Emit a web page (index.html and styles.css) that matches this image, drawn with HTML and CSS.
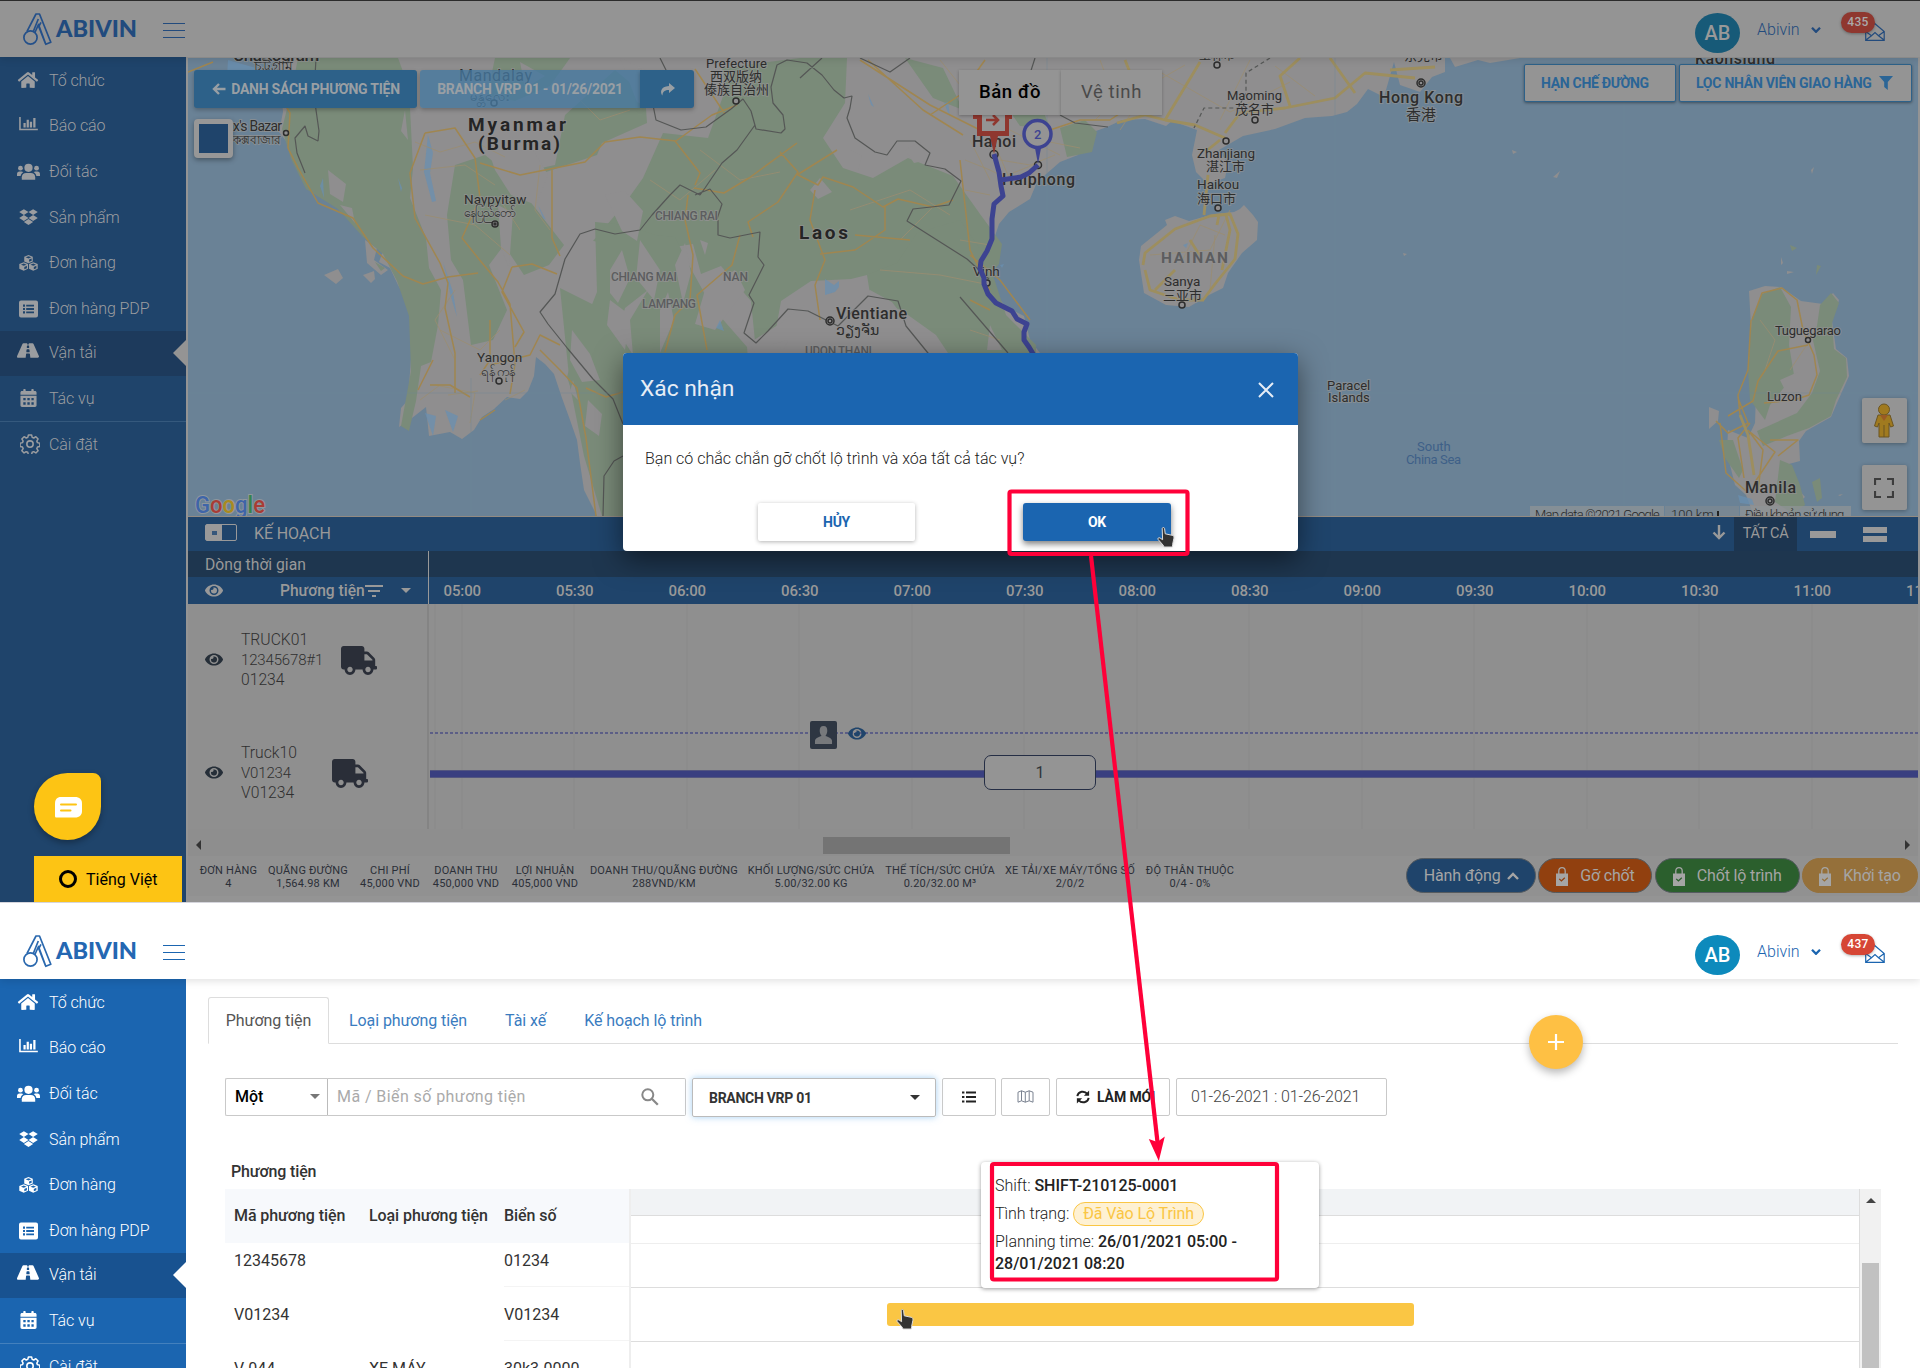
FILE: index.html
```html
<!DOCTYPE html>
<html lang="vi">
<head>
<meta charset="utf-8">
<title>Abivin vRoute</title>
<link rel="stylesheet" href="styles.css">
</head>
<body>
<svg class="sprite" aria-hidden="true">
  <symbol id="home" viewBox="0 0 576 512"><path d="M280.37 148.26L96 300.11V464a16 16 0 0 0 16 16l112.06-.29a16 16 0 0 0 15.92-16V368a16 16 0 0 1 16-16h64a16 16 0 0 1 16 16v95.64a16 16 0 0 0 16 16.05L464 480a16 16 0 0 0 16-16V300L295.67 148.26a12.19 12.19 0 0 0-15.3 0zM571.6 251.47L488 182.56V44.05a12 12 0 0 0-12-12h-56a12 12 0 0 0-12 12v72.61L318.47 43a48 48 0 0 0-61 0L4.34 251.47a12 12 0 0 0-1.6 16.9l25.5 31A12 12 0 0 0 45.15 301l235.22-193.74a12.19 12.19 0 0 1 15.3 0L530.9 301a12 12 0 0 0 16.9-1.6l25.5-31a12 12 0 0 0-1.7-16.93z"/></symbol>
  <symbol id="chart" viewBox="0 0 20 15"><path d="M0 0h1.700v12.600H20v1.700H0zM4.600 6.500H7v4.700H4.600zM8 3h2.400v8.200H8zM11.400 5h2.400v6.200h-2.400zM15.100 1h2.400v10.200h-2.400z"/></symbol>
  <symbol id="users" viewBox="0 0 24 18"><circle cx="12" cy="4.600" r="4.300"/><path d="M5 17v-2.500c0-3 2-4.500 4.500-4.500h5c2.500 0 4.500 1.500 4.500 4.500V17z"/><circle cx="3.600" cy="5" r="2.500"/><circle cx="20.400" cy="5" r="2.500"/><path d="M0 13v-1.500C0 9.500 1 8.500 2.500 8.500h2.300c.8 0 1.300.3 1.700.8C4.700 10.300 4 11.500 3.800 13.300H0zM24 13v-1.500c0-2-1-3-2.500-3h-2.300c-.8 0-1.300.3-1.700.8 1.800 1 2.500 2.200 2.700 4H24z"/></symbol>
  <symbol id="box" viewBox="0 0 528 512"><path d="M264.400 116.300l-132 84.300 132 84.300-132 84.300L0 284.100l132.300-84.300L0 116.300 132.300 32l132.100 84.300zM131.600 395.700l132-84.300 132 84.300-132 84.300-132-84.300zm132.800-111.600l132-84.300-132-83.600L395.700 32 528 116.300l-132.300 84.300L528 284.800l-132.300 84.300-131.300-85z"/></symbol>
  <symbol id="cubes" viewBox="0 0 20 17"><path fill-rule="evenodd" d="M10 0l4.500 1.800v5L10 8.800 5.500 6.800v-5zM10 1.300L7 2.500l3 1.200 3-1.200zM10.600 4.800v2.500l2.700-1.200V3.700zM5 7.700l4.500 1.900v5L5 16.600.3 14.600v-5zM5 9.100L2.100 10.300 5 11.500l2.900-1.200zM5.600 12.600V15l2.700-1.100v-2.400zM15 7.700l4.700 1.900v5L15 16.600l-4.500-2v-5zM15 9.100l-2.900 1.200L15 11.500l2.900-1.200zM15.600 12.600V15l2.700-1.100v-2.400z"/></symbol>
  <symbol id="listalt" viewBox="0 0 19 17"><path fill-rule="evenodd" d="M2 0h15a2 2 0 0 1 2 2v13a2 2 0 0 1-2 2H2a2 2 0 0 1-2-2V2a2 2 0 0 1 2-2zM4 4v2.200h2V4zM7.200 4.200V6H15V4.200zM4 7.500v2h2v-2zM7.200 7.600v1.800H15V7.600zM4 10.800V13h2v-2.200zM7.200 11v1.800H15V11z"/></symbol>
  <symbol id="road" viewBox="0 64 576 384"><path d="M573.19 402.67l-139.79-320C428.43 71.29 417.6 64 405.68 64h-97.59l2.45 23.16c.5 4.72-3.21 8.84-7.96 8.84h-29.16c-4.75 0-8.46-4.12-7.96-8.84L267.91 64h-97.59c-11.93 0-22.75 7.29-27.73 18.67L2.8 402.67C-6.45 423.86 8.31 448 30.54 448h196.84l10.31-97.68c.86-8.14 7.72-14.32 15.91-14.32h68.8c8.19 0 15.05 6.18 15.91 14.32L348.62 448h196.84c22.23 0 36.99-24.14 27.73-45.33zM260.4 135.16a8 8 0 0 1 7.96-7.16h39.29c4.09 0 7.53 3.09 7.96 7.16l4.6 43.58c.75 7.09-4.81 13.26-11.93 13.26h-40.54c-7.13 0-12.68-6.17-11.93-13.26l4.59-43.58zM315.64 304h-55.29c-9.5 0-16.91-8.23-15.91-17.68l5.07-48c.86-8.14 7.72-14.32 15.91-14.32h45.15c8.19 0 15.05 6.18 15.91 14.32l5.07 48c1 9.45-6.41 17.68-15.91 17.68z"/></symbol>
  <symbol id="calendar" viewBox="0 0 17 19"><path fill-rule="evenodd" d="M3 2V.8C3 .3 3.300 0 3.800 0h.9c.5 0 .8.3.8.8V2h6V.8c0-.5.3-.8.8-.8h.9c.5 0 .8.3.8.8V2h1.300C16.300 2 17 2.700 17 3.700V6H0V3.700C0 2.700.7 2 1.700 2zM0 7.200h17v10c0 1-.7 1.700-1.700 1.700H1.700C.7 18.900 0 18.200 0 17.200zM3 9.500V12h2.500V9.500zm4.300 0V12h2.500V9.500zm4.300 0V12H14V9.500zM3 14v2.500h2.500V14zm4.300 0v2.500h2.500V14zm4.300 0v2.500H14V14z"/></symbol>
  <symbol id="cog" viewBox="0 0 24 24"><g fill="none" stroke="currentColor" stroke-width="1.900" stroke-linejoin="round"><circle cx="12" cy="12" r="3.800"/><path d="M10 1.500h4l.7 3 2 .8 2.600-1.600 2.800 2.800-1.600 2.700.8 1.900 3 .8v4l-3 .7-.8 2 1.600 2.600-2.800 2.800-2.700-1.600-1.900.8-.8 3h-4l-.7-3-2-.8-2.600 1.600-2.800-2.800 1.600-2.700-.8-1.900-3-.8v-4l3-.7.8-2-1.600-2.600 2.800-2.800 2.700 1.600 1.900-.8z" transform="translate(.5 -.3) scale(.96)"/></g></symbol>
  <symbol id="eye" viewBox="0 60 576 392"><path d="M572.52 241.4C518.29 135.59 410.93 64 288 64S57.68 135.64 3.48 241.41a32.35 32.35 0 0 0 0 29.19C57.71 376.41 165.07 448 288 448s230.32-71.64 284.52-177.41a32.35 32.35 0 0 0 0-29.19zM288 400a144 144 0 1 1 144-144 143.93 143.93 0 0 1-144 144zm0-240a95.31 95.31 0 0 0-25.31 3.79 47.85 47.85 0 0 1-66.9 66.9A95.78 95.78 0 1 0 288 160z"/></symbol>
  <symbol id="truck" viewBox="0 0 640 512"><path d="M624 352h-16V243.900c0-12.700-5.100-24.900-14.100-33.900L494 110.100c-9-9-21.200-14.100-33.900-14.100H416V48c0-26.500-21.500-48-48-48H48C21.500 0 0 21.500 0 48v320c0 26.500 21.500 48 48 48h16c0 53 43 96 96 96s96-43 96-96h128c0 53 43 96 96 96s96-43 96-96h48c8.800 0 16-7.200 16-16v-32c0-8.800-7.200-16-16-16zM160 464c-26.500 0-48-21.500-48-48s21.500-48 48-48 48 21.500 48 48-21.500 48-48 48zm320 0c-26.500 0-48-21.500-48-48s21.500-48 48-48 48 21.500 48 48-21.500 48-48 48zm80-208H416V144h44.100l99.900 99.900V256z"/></symbol>
  <symbol id="lock" viewBox="0 0 12 19"><path fill="none" stroke="currentColor" stroke-width="1.300" d="M2.800 7V4C2.800 1.800 4 .7 6 .7S9.200 1.800 9.200 4v3"/><path fill-rule="evenodd" d="M0 6.500h12V19H0zM3.600 11.400l-.8.900 2.600 2.500 3.800-3.600-.8-.9-3 2.800z"/></symbol>
  <symbol id="hand" viewBox="0 0 18 21"><path stroke="#ddd" stroke-width="1" fill="#333" d="M5.200 1.600c0-1.400 2.300-1.400 2.400 0l.6 5.200 7 1.500c1.600.5 1.900 1.300 1.700 3l-1.300 6.200-.2 2.500H7L6 18 1.200 12.600c-.8-1.400.5-2.400 1.900-1.600l2.500 1.700z"/></symbol>
  <symbol id="logo" viewBox="23 12 30 33"><g fill="none" stroke="currentColor" stroke-width="1.700" stroke-linejoin="round"><circle cx="30.500" cy="36.500" r="6.600"/><path d="M27 30.300L36 13h3.500l11.300 28.300-5 2-7.300-19.800-3.800 8.500M33.300 30.500l5-12.500M41 21.300l-2.300 4.200 6.800 17.200"/></g></symbol>
  <symbol id="mail" viewBox="0 0 20 18"><path fill="none" stroke="currentColor" stroke-width="1.200" d="M.7 8.500L6 2.500 10 .8l9.200 7.700v8.800H.7zM.7 8.500l5.800 4.300L10 9.500l3.500 3.300 5.700-4.300M6.500 12.800L.9 17.100M13.500 12.800l5.600 4.300"/></symbol>
</svg>

<div class="page">
<!-- ============ Route planning screen with confirm dialog ============ -->
<section class="screen screen-plan">
  <header class="topbar">
    <svg class="logo-mark"><use href="#logo"/></svg>
    <svg class="logo-name" viewBox="0 0 80 22"><text x="0" y="18.500" textLength="81" lengthAdjust="spacingAndGlyphs">ABIVIN</text></svg>
    <div class="burger"><i></i><i></i><i></i></div>
    <div class="account">
      <span class="avatar">AB</span><span class="user">Abivin</span>
      <svg class="chev" viewBox="0 0 10 6"><path d="M1 .8l4 4 4-4" fill="none" stroke="currentColor" stroke-width="2.300"/></svg>
      <span class="inbox"><svg><use href="#mail"/></svg><b>435</b></span>
    </div>
  </header>
  <div class="columns">
    <nav class="side">
      <a><svg class="w21"><use href="#home"/></svg>Tổ chức</a>
      <a><svg class="w20 up"><use href="#chart"/></svg>Báo cáo</a>
      <a><svg class="w23"><use href="#users"/></svg>Đối tác</a>
      <a><svg class="w20"><use href="#box"/></svg>Sản phẩm</a>
      <a><svg class="w20"><use href="#cubes"/></svg>Đơn hàng</a>
      <a><svg class="w20"><use href="#listalt"/></svg>Đơn hàng PDP</a>
      <a class="on"><svg class="w21 road"><use href="#road"/></svg>Vận tải</a>
      <a class="low"><svg class="w20 cal"><use href="#calendar"/></svg>Tác vụ</a>
      <a class="sep"><svg class="w20 cog"><use href="#cog"/></svg>Cài đặt</a>
      <div class="chat"><svg viewBox="0 0 27 21"><path fill="#fff" d="M6 0h14c4.500 0 7 2.500 7 6.500v7.500c0 4-2.500 6.500-7 6.500H1.500C.5 20.500 0 20 0 19V6.500C0 2.500 2 0 6 0z"/><path stroke="#fdc414" stroke-width="2" stroke-linecap="round" d="M6 7.500h15M6 13.500h9.500"/></svg></div>
      <div class="lang"><i></i>Tiếng Việt</div>
    </nav>
    <main class="work">
      <div class="map">
        <svg class="mapart" viewBox="188 58 1730 458">
          <g class="land">
            <path d="M188 58H278L283 112 279 132 290 146 305 170 325 195 329 180 334 200 341 209 348 192 358 207 366 212 380 218 369 225 372 238 384 248 379 262 390 268 398 285 408 303 413 318 412 345 408 400 401 408 399 427 412 418 426 407 429 436 450 432 462 439 474 430 482 417 494 409 507 397 520 399 528 391 534 376 536 357 545 364 554 374 562 398 570 420 577 440 580 463 584 490 597 516H1040V353L1030 340 1024 316 1006 307 992 290 988 268 992 245 999 224 1009 212 1030 199 1037 182 1060 162 1078 155 1085 135 1107 127 1122 120 1145 119 1166 126 1172 121 1197 130 1192 155 1196 172 1208 184 1225 178 1228 164 1219 150 1243 136 1275 129 1305 118 1332 116 1347 112 1357 104 1368 89 1384 97 1394 62 1400 85 1420 92 1432 77 1445 72V58z"/>
            <path d="M1139 260l2-14 26-21 -2-5 10-4 14 5 25-7 20-2 6-3 4-4 9 10 5 7-1 18-15 13-14 20-5 15-14 7-20 12-23-2-22-12z"/>
            <path d="M1749 291l16-5 16 1 20 14 22 3 10-11 6 7-7 21 4 28 11 9 2 18-12 27-6 14-25 14-7 10 1 20-15 4 10 20 10 12-10 9h-7v10h-34l-8-21-11-10-8-32 1-23 20 8 7-15 1-30-4-48z"/>
            <path d="M1709 407l10 4-1 10-9 8zM1450 58h70l-30 5-12-3-23 7zM324 275l14-6 5 9-7 6zM365 240l12 8-3 12 14 10-7 5-14-12zM363 275l11-4 1 8-4 4z"/>
            <path d="M1512 150l5 2-4 2zM1560 171l-3 7-4-1zM1811 170l3-3-2 7zM1781 257l2 6-2 2zM1787 271l7 1-7 2zM1403 253l4 1-3 2zM1334 425l7-2-7 2zM1838 495l5-1-3 2z"/>
          </g>
          <g class="wood">
            <path d="M298 58h100l11 30 4 80-3 30 16 40 3 30 12 22-3 35-7 37-10 4-5 35-7 30-8-5 10-55-2-55-12-35-14-27-20-17-25-28-32-20-15-30-9-30 10-40z"/>
            <path d="M495 58h75l-20 28-35 15-28-5zM615 70l30 25 2 28-45 20-5 12-60 20-8 25 35 45-15 20-25 10-20-30-15 20 18 45-14 30-22 5-8-65-12-20-4-45 8-50 30-10 25 20 45-10 10-50z"/>
            <path d="M800 58h47l-2 45-22 35 20 30 30 10 35-20 45 18 27 38 22 30-3 20-20 25-28-10-30-15-30 5-40 10-40 2-30 20-8 45-18-5-4-40-30-35-20 8-8-30-30 5-30-20-15 15-25-3 30-35 20-28 20-45 45 5 18-50-4-20z"/>
            <path d="M595 222l30 3 30 10 20 2 15 30 22 40 35 40 4 52-12 40-5 22-50 4-40 40-22-30-35-38-20-60 12-40 18-45z"/>
            <path d="M560 288l40 20 24 45v163h-22l-18-60-14-70z"/>
            <path d="M960 220l28 40 18 55 30 30v35h-70l-30-45-35-25-30-10-4-25 30-12 20-30zM995 90l20-15 25 28 10 25-30-2zM1060 128l25-8 12 12-5 20-25 5zM905 58l28 40 30 12-20-42z"/>
            <path d="M1752 318l10-24 18-7 11 20-2 38 5 30-24 30-5 15-15-20-2-30zM1820 305l11-12 8 10-7 20 2 26 12 9 1 19-11 23-5 16-22 12-22 8-24 10-6-15 40-18 15-20 8-22-8-35 5-10z"/>
            <path d="M1719 440l14 0 10 30-4 8-14-20zM1780 460l12 5 8 20 5 20-12 9-18-12zM1812 482l8-4 2 20-5 4zM1790 245l7 3-5 3zM1817 265l4 1-5 9zM375 262l10 6-4 3z"/>
          </g>
          <g class="gap">
            <path d="M328 170l18 14-3 18-13-8zM340 205l12 3 3 15zM480 125l50 20 18 30-12 30-25-10-16-25zM498 205l15 8-4 55-8-20zM605 195l20-4 18 20-6 30-15-10zM610 270l12-20 8 28-12 25-8-10zM640 240l20 30-6 30-18-22zM675 265l10-22 6 30-8 30zM648 290l-18 30 3 35-14-22 6-25zM610 300l20 15-5 35-18-25zM705 290l30-20 10 20-30 40-20-6zM660 310l8-18 6 28-14 33zM805 305l40 0 25-15 22 12 30 40v11H755l-6-10 32-20zM810 190l10-12 12 14-14 7zM990 325l12 25h-15zM905 150l15-8 8 18-14 3zM1780 380l18-8 12 8-5 14h-18z"/>
            <path d="M572 330l18 24 10 26-18 2-12-22zM588 400l14 14-3 22-14-10zM573 380l-3 12 8 8zM405 110l3 30-7-9zM620 58l30 14 20 20-8 20-25-10zM520 62l25 14-20 12zM850 150l12 6-4 16-8-8zM700 240l8 3-3 12zM770 345l18-5-4 9z"/>
          </g>
          <g class="water">
            <path d="M825 279l9 6 5-4v6l-4 5-10 3zM720 320l4 11-8-3zM538 205l8 15-3-2zM868 94l6 13-3-2zM944 103l4-1 2 15zM398 178l4 10-1 4zM428 135l5 18-3 20 6 28-4 1-8-30zM443 262l10 30 4 25-6-20zM323 178l1 20-4-12zM1000 265l4-1-2 4zM1183 245l5-2-2 5zM228 60l35 10-22 16-14-10z"/>
            <path d="M425 413l8 23 3-20zM445 410l8 22 5-16zM1738 495l14 4 2 6-14-2z"/>
          </g>
          <g class="roads thin">
            <path d="M415 142l25 10 35-10 30 15M420 170l45-5 30 20M425 215l50 10 35 30M540 165l-5 45 15 20M455 290l-20 30 20 40M440 330l40 20 20-20M500 200l20 30M570 90l30 30 30-10M650 180l30 20 35-30M700 150l40 30 40-8M880 270l60 5 50 10M850 210l60-20 40 25M900 240l35-35M940 60l40 50 30 70M1120 130l30-45 35-20M1160 72l70 40 60-30M1100 60l15 40-20 20M1250 60l-30 60M1275 66l40 30M1180 265l20-40 25 10M1150 255l60-5 20-40M1210 290l5-55M1760 320l15 20-10 30M1810 340l-20 30M435 385l40 8-5 30M448 395l30-4M420 400l20-15"/>
            <path d="M965 160l25 10 30 15M970 140l20 40M1000 160l30 5 25-10M1008 175l30-12M1040 140l40 8M1010 130l50 25M960 240l30 5M985 95l20 20M965 190l25 5M970 330l30 10M505 400l20-10"/>
          </g>
          <g class="roads">
            <path d="M281 98l9 15-2 35 10 20 20 35 35 15 20 30 30 28 20 8 25-7 30-4M188 72l25-10M425 133l-15 40 5 45 25 45 8 20-3 25 10 45 0 40M425 133l30-5 20 30 5 40-18 40 16 20 20 24 12 22 5 60-5 30M480 163l40 12 65-13 20-20 35-5 36 4 36-26 25-10M695 69l20 30 10 15M675 141l25 32-5 12M552 168v70l8 18M512 267l20-3 25 10M512 267l-10 25 22 40-9 15M540 350l20 20 17 18 9 50 10 78M586 388l20 9 17-5M694 188l30 5 25-15 48-35M797 175l40-25M780 152l18 20-20 30-30 20 5 15M798 175l20 10 5-8 30 10 30 20 15-8 35 8 20-7M885 205v25l-30 20-35 4M855 235l55 5M815 190l-5 30 15 40-10 25 5 35M688 195l-3 25 8 35-3 45-15 15-10 37M740 235l-8 30-35 30 10 55"/>
            <path d="M860 60l70 45 50 25M868 60l55 50 40 25M985 60l-25 35-30 20M960 160l10 90 20 40M970 255l30 25 30 40M1050 130l30-10 30 0 30-20M970 300l20 10M433 360l-15 30M430 385l20 0 20 12M490 365l40-10 10-20 20 10M480 420l15-10M480 375l10-15 0-40M1752 320l10-27 20-5 15 12 6 30 11 25 3 20-8 20-15 5-30 3M1751 320l-3 50-10 25 2 20M1808 345l-30 6-20 30-5 20-25 15M1738 398l10 25-20 10-12-12M1720 423l6 50 20 18M1750 423l-12 15 6 40M1748 430l15 20-5 40M1750 432l25 20-20 30M1770 440l28 0-20 16"/>
          </g>
          <g class="roads main">
            <path d="M1165 120l-20-5-28 8M1165 120l35-58M1165 120l30 5 30 13M1220 140l-15 12M1208 175l-4 40M1225 133l15-20 45-5 50-10 30-25 50 5M1300 58l-20 18 10 30M1330 58l25 35M1125 60l20 50M1390 70l45-3M1143 265l2-12 30-24 35-13 20-2 8 20-3 25-20 25-12 16M1145 270l5 20 30 10 24 0M1155 290l20-20M1226 215l4 15-8 40M1219 215l-2 10M1190 240l10 16M1740 415l8 20 6 40"/>
          </g>
          <g class="border">
            <path d="M316 58l-2 38 5 35-1 10-10-5-3-10-10 12 2 15 8 20M660 58l6 12-14 30 4 20 25 10 25-3 25-18 12-10 8 12 5 18 25 4 4-4 -2-14-10-12-2-16 6-22 10-5 20 3 15 12 12 15 10 8 8-2-2 12-3 10 8 20 20 14 12 3 10-14 18 0 15 12-5 12 20 4 16 12-12 24-36 4-6 12 60 38 22 20M800 78l22-20M755 125l-18 25-15 13-17 25-5 7-20-10-10 10-18 20-12 15-25 4-20-5-15 5-15 25-10 35-15 18 8 12 20 25 25 30 20 20 10 25M695 195l15-6 12 15-5 15M718 220v15l12 3 30-6-2 25 6 8-15 30 5 8-10 30 12 10 12-12 20-22 20 2 30 15 20-20 10-10 30 5 8 25 26 32M960 297l48 56M603 516l1-40 10-15 9-5M1035 58l-8 25M1060 115l15 8 33 4M860 58l30 14 20-14"/>
            <path stroke-dasharray="4 3" d="M1270 58l-24 15v20l-8 15-34 0-10 20"/>
          </g>
          <path class="grid" d="M471 378v138M1047 58v295M1335 58v458M1624 102v414M1911 58v458M188 393H1918"/>
          <g class="lbl">
            <text x="233" y="61" font-size="17" font-weight="500" letter-spacing="-.4">Chattogram</text><text x="254" y="71" font-size="14">চট্টগ্রাম</text>
            <text x="233" y="131" font-size="14" textLength="49">x's Bazar</text><text x="233" y="144" font-size="12">কক্সবাজার</text><circle cx="286" cy="133" r="2.500"/>
            <text x="459" y="81" font-size="16" textLength="73">Mandalay</text><text x="470" y="101" font-size="13">မန္တလေး</text><circle cx="494" cy="103" r="3"/>
            <text class="big" x="468" y="131" textLength="98">Myanmar</text><text class="big" x="478" y="150" textLength="82">(Burma)</text>
            <text x="464" y="204" font-size="13.500">Naypyitaw</text><text x="464" y="217" font-size="12">နေပြည်တော်</text><circle cx="495" cy="224" r="3"/><circle cx="495" cy="224" r="1"/>
            <text x="477" y="362" font-size="13.500">Yangon</text><text x="481" y="376" font-size="13">ရန်ကုန်</text><circle cx="499" cy="381" r="3"/>
            <text x="706" y="68" font-size="13" textLength="61">Prefecture</text><text x="710" y="81" font-size="13">西双版纳</text><text x="704" y="94" font-size="13">傣族自治州</text><circle cx="736" cy="101" r="3"/>
            <text class="big" x="799" y="239" font-size="19" textLength="49">Laos</text>
            <text x="836" y="319" font-size="16" font-weight="500" textLength="71">Vientiane</text><text x="836" y="335" font-size="14">ວຽງຈັນ</text><circle cx="830" cy="321" r="4"/><circle cx="830" cy="321" r="2"/>
            <text x="972" y="147" font-size="16" font-weight="500" textLength="44">Hanoi</text><circle cx="994" cy="154.500" r="4"/>
            <text x="1002" y="185" font-size="16" font-weight="500" textLength="73">Haiphong</text><circle cx="1038" cy="165" r="3.500"/>
            <text x="973" y="276" font-size="13.500">Vinh</text><circle cx="987" cy="283" r="3"/>
            <text x="1227" y="100" font-size="13" textLength="55">Maoming</text><text x="1235" y="114" font-size="13">茂名市</text><circle cx="1255" cy="120" r="3"/>
            <text x="1197" y="158" font-size="13.500" textLength="58">Zhanjiang</text><text x="1206" y="171" font-size="13">湛江市</text><circle cx="1226" cy="141" r="3"/>
            <text x="1197" y="189" font-size="13.500">Haikou</text><text x="1197" y="203" font-size="13">海口市</text><circle cx="1218" cy="208" r="3"/>
            <text x="1164" y="286" font-size="13.500">Sanya</text><text x="1163" y="300" font-size="13">三亚市</text><circle cx="1182" cy="305" r="3"/>
            <text x="1379" y="103" font-size="16" font-weight="500" textLength="84">Hong Kong</text><text x="1406" y="120" font-size="15">香港</text><circle cx="1421" cy="83" r="4"/><circle cx="1421" cy="83" r="2"/>
            <text x="1199" y="60" font-size="12">玉林市</text><circle cx="1217" cy="65" r="3"/>
            <text x="1404" y="60" font-size="13">东莞市</text>
            <text x="1695" y="64" font-size="16" font-weight="500" textLength="80">Kaohsiung</text>
            <text x="1327" y="390" font-size="13">Paracel</text><text x="1328" y="402" font-size="13">Islands</text>
            <text x="1775" y="335" font-size="13" textLength="66">Tuguegarao</text><circle cx="1808" cy="340" r="2.500"/>
            <text x="1767" y="401" font-size="13">Luzon</text>
            <text x="1745" y="493" font-size="16" font-weight="500" textLength="51">Manila</text><circle cx="1770" cy="501" r="4"/><circle cx="1770" cy="501" r="2"/>
          </g>
          <g class="lbl soft">
            <text x="655" y="220" textLength="63">CHIANG RAI</text><text x="611" y="281" textLength="66">CHIANG MAI</text><text x="723" y="281">NAN</text><text x="642" y="308" textLength="54">LAMPANG</text><text x="805" y="355" textLength="67">UDON THANI</text>
            <text class="prov" x="1161" y="263" textLength="67">HAINAN</text>
          </g>
          <g class="sea"><text x="1417" y="451">South</text><text x="1406" y="464" textLength="55">China Sea</text></g>
          <path class="route" d="M994 154l5 18 2 14 2 10-9 8-2 15 0 20-5 12-6 10-1 8 4 9 0 6 4 10 8 9 16 8 5 8 10 5-3 8 0 8 5 7 9 15M1001 180l20-3 8-4 9-8"/>
          <path class="depart" d="M973 119v-5h39v5h-3v17H998l-4 18-4-18H977v-17z"/><path fill="#949494" d="M982 115h23v16h-23z"/><path d="M986 120h11m-4-5l5 5-5 5" stroke="#8f372f" stroke-width="2.500" fill="none"/>
          <path d="M1038 164l-3-16h6z" fill="#3d4391"/><circle cx="1037.500" cy="134" r="13.500" fill="#949494" stroke="#3d4391" stroke-width="3.500"/><text class="pin" x="1034" y="139">2</text>
          <g class="google"><text x="195" y="513" textLength="70" lengthAdjust="spacingAndGlyphs"><tspan fill="#3f65a8">G</tspan><tspan fill="#a83c35">o</tspan><tspan fill="#a98a20">o</tspan><tspan fill="#3f65a8">g</tspan><tspan fill="#37834b">l</tspan><tspan fill="#a83c35">e</tspan></text></g>
        </svg>
        <div class="crumbs"><span class="back"><svg viewBox="0 0 14 12"><path d="M13.500 6H2M7 1L2 6l5 5" fill="none" stroke="currentColor" stroke-width="2.400"/></svg>DANH SÁCH PHƯƠNG TIỆN</span><span class="branch">BRANCH VRP 01 - 01/26/2021</span><span class="share"><svg viewBox="0 0 15 13"><path fill="currentColor" d="M9 0l6 5-6 5V7C5 7 2.500 8.500 2.500 12.500 0 10 0 3.500 9 3z"/></svg></span></div>
        <div class="swatch"></div>
        <div class="types"><span class="cur">Bản đồ</span><span>Vệ tinh</span></div>
        <div class="filters"><span>HẠN CHẾ ĐƯỜNG</span><span>LỌC NHÂN VIÊN GIAO HÀNG<svg viewBox="0 0 14 14"><path fill="currentColor" d="M0 0h14L8.800 6v8L5.200 11V6z"/></svg></span></div>
        <div class="ctl peg"><svg viewBox="0 0 20 35"><g fill="#a07a1f" stroke="#6b5523"><path d="M4 12h12l3.500 11-3 1L15 20v14H5V20l-1.500 4-3-1z"/><circle cx="10" cy="6.500" r="5.500"/></g><path d="M6 12h8l-4 6z" fill="#9a5a25"/><path d="M10 22v12" stroke="#6b5523"/></svg></div>
        <div class="ctl full"><svg viewBox="0 0 20 20"><path d="M1 7V1h6M13 1h6v6M19 13v6h-6M7 19H1v-6" fill="none" stroke="#3d3d3d" stroke-width="2.200"/></svg></div>
        <div class="credits"><span>Map data ©2021 Google</span><span>100 km <i></i></span><span>Điều khoản sử dụng</span></div>
      </div>
      <div class="planbar">
        <span class="toggle"><i></i></span><span class="ptitle">KẾ HOẠCH</span>
        <svg class="down" viewBox="0 0 14 15"><path d="M7 0v13M1.500 7.500L7 13l5.500-5.500" fill="none" stroke="currentColor" stroke-width="2.400"/></svg>
        <span class="all">TẤT CẢ</span><i class="one"></i><span class="two"><i></i><i></i></span>
      </div>
      <div class="tl-title"><span>Dòng thời gian</span></div>
      <div class="tl-head">
        <div class="tl-left"><svg class="eye"><use href="#eye"/></svg><span>Phương tiện</span><svg class="flt" viewBox="0 0 18 12"><path d="M0 1h18M3 6h12M7 11h4" stroke="currentColor" stroke-width="2"/></svg><i class="caret"></i></div>
        <div class="hours"><span>05:00</span><span>05:30</span><span>06:00</span><span>06:30</span><span>07:00</span><span>07:30</span><span>08:00</span><span>08:30</span><span>09:00</span><span>09:30</span><span>10:00</span><span>10:30</span><span>11:00</span><span>11:30</span></div>
      </div>
      <div class="tl-body">
        <div class="vehicles">
          <div class="veh"><svg class="eye"><use href="#eye"/></svg><p>TRUCK01<br><small>12345678#1</small><br>01234</p><svg class="truck"><use href="#truck"/></svg></div>
          <div class="veh"><svg class="eye"><use href="#eye"/></svg><p>Truck10<br><small>V01234</small><br>V01234</p><svg class="truck"><use href="#truck"/></svg></div>
        </div>
        <div class="lanes">
          <div class="dots"></div><div class="solid"></div>
          <div class="person"><svg viewBox="0 0 18 19"><path fill="#77797c" d="M9 0c3 0 4 2 4 5 0 2-1 4.500-2 5.500 3 1 6.500 2 7 5V19H0v-3.500c.5-3 4-4 7-5C6 9.500 5 7 5 5c0-3 1-5 4-5z"/></svg></div>
          <svg class="eye bluey"><use href="#eye"/></svg>
          <div class="stop">1</div>
        </div>
      </div>
      <div class="hscroll"><i class="l"></i><i class="thumb"></i><i class="r"></i></div>
      <footer class="stats">
        <div class="nums"><span>ĐƠN HÀNG<br>4</span><span>QUÃNG ĐƯỜNG<br>1,564.98 KM</span><span>CHI PHÍ<br>45,000 VND</span><span>DOANH THU<br>450,000 VND</span><span>LỢI NHUẬN<br>405,000 VND</span><span>DOANH THU/QUÃNG ĐƯỜNG<br>288VND/KM</span><span>KHỐI LƯỢNG/SỨC CHỨA<br>5.00/32.00 KG</span><span>THỂ TÍCH/SỨC CHỨA<br>0.20/32.00 M³</span><span>XE TẢI/XE MÁY/TỔNG SỐ<br>2/0/2</span><span>ĐỘ THÂN THUỘC<br>0/4 - 0%</span></div>
        <div class="acts">
          <span class="act blue">Hành động<svg viewBox="0 0 12 8"><path d="M1 7l5-5 5 5" fill="none" stroke="currentColor" stroke-width="2.400"/></svg></span>
          <span class="act orange"><svg class="lock"><use href="#lock"/></svg>Gỡ chốt</span>
          <span class="act green"><svg class="lock"><use href="#lock"/></svg>Chốt lộ trình</span>
          <span class="act amber"><svg class="lock"><use href="#lock"/></svg>Khởi tạo</span>
        </div>
      </footer>
    </main>
  </div>
  <div class="modal">
    <div class="mhead"><h2>Xác nhận</h2><svg viewBox="0 0 16 16"><path d="M1 1l14 14M15 1L1 15" stroke="#e6edf6" stroke-width="2"/></svg></div>
    <p>Bạn có chắc chắn gỡ chốt lộ trình và xóa tất cả tác vụ?</p>
    <div class="mbtns"><span class="cancel">HỦY</span><span class="ok">OK</span></div>
  </div>
</section>

<!-- ============ Vehicle list screen ============ -->
<section class="screen screen-list">
  <header class="topbar">
    <svg class="logo-mark"><use href="#logo"/></svg>
    <svg class="logo-name" viewBox="0 0 80 22"><text x="0" y="18.500" textLength="81" lengthAdjust="spacingAndGlyphs">ABIVIN</text></svg>
    <div class="burger"><i></i><i></i><i></i></div>
    <div class="account">
      <span class="avatar">AB</span><span class="user">Abivin</span>
      <svg class="chev" viewBox="0 0 10 6"><path d="M1 .8l4 4 4-4" fill="none" stroke="currentColor" stroke-width="2.300"/></svg>
      <span class="inbox"><svg><use href="#mail"/></svg><b>437</b></span>
    </div>
  </header>
  <div class="columns">
    <nav class="side">
      <a><svg class="w21"><use href="#home"/></svg>Tổ chức</a>
      <a><svg class="w20 up"><use href="#chart"/></svg>Báo cáo</a>
      <a><svg class="w23"><use href="#users"/></svg>Đối tác</a>
      <a><svg class="w20"><use href="#box"/></svg>Sản phẩm</a>
      <a><svg class="w20"><use href="#cubes"/></svg>Đơn hàng</a>
      <a><svg class="w20"><use href="#listalt"/></svg>Đơn hàng PDP</a>
      <a class="on"><svg class="w21 road"><use href="#road"/></svg>Vận tải</a>
      <a class="low"><svg class="w20 cal"><use href="#calendar"/></svg>Tác vụ</a>
      <a class="sep"><svg class="w20 cog"><use href="#cog"/></svg>Cài đặt</a>
    </nav>
    <main class="content">
      <div class="tabs"><span class="tab">Phương tiện</span><span>Loại phương tiện</span><span>Tài xế</span><span>Kế hoạch lộ trình</span><div class="fab"><svg viewBox="0 0 16 16"><path d="M8 0v16M0 8h16" stroke="#fff" stroke-width="2.200"/></svg></div></div>
      <div class="tools">
        <div class="sel">Một<i class="caret"></i></div>
        <div class="search">Mã / Biển số phương tiện<svg viewBox="0 0 18 18"><circle cx="6.800" cy="6.800" r="5.500" fill="none" stroke="#888" stroke-width="2"/><path d="M10.800 10.800l6 6" stroke="#888" stroke-width="2.300"/></svg></div>
        <div class="bsel">BRANCH VRP 01<i class="caret"></i></div>
        <div class="tbtn list"><svg viewBox="0 0 14 12"><path d="M0 1.500h2.400M4 1.500h10M0 6h2.400M4 6h10M0 10.500h2.400M4 10.500h10" stroke="#222" stroke-width="2"/></svg></div>
        <div class="tbtn mapb"><svg viewBox="0 0 17 13"><path d="M1 2.200L4.500.8 8.300 2.200 12.200.8 16 2.200v10l-3.800-1.400-3.900 1.400-3.800-1.400L1 12.200zM4.500.8v10M8.300 2.200v10M12.200.8v10" fill="none" stroke="#7a8290"/></svg></div>
        <div class="tbtn refresh"><svg viewBox="0 0 16 15"><path d="M1.500 6.500C2.500 1 9.500-.3 13 4M14.500 8.500C13.500 14 6.500 15.300 3 11" fill="none" stroke="#222" stroke-width="2.200"/><path d="M15 0v6H9zM1 15V9h6z" fill="#222"/></svg>LÀM MỚI</div>
        <div class="date">01-26-2021 : 01-26-2021</div>
      </div>
      <h3>Phương tiện</h3>
      <div class="board">
        <div class="tbl">
          <div class="row hd"><span>Mã phương tiện</span><span>Loại phương tiện</span><span>Biển số</span></div>
          <div class="row"><span>12345678</span><span></span><span>01234</span></div>
          <div class="row"><span>V01234</span><span></span><span>V01234</span></div>
          <div class="row"><span>V-044</span><span>XE MÁY</span><span>30k3-0000</span></div>
        </div>
        <div class="gantt"><div class="g1"></div><div class="g2"></div><div class="g3"></div><div class="g3"><i class="bar"></i></div></div>
        <div class="vscroll"><i class="u"></i><i class="vt"></i></div>
      </div>
      <div class="tip">
        <p>Shift: <b>SHIFT-210125-0001</b></p><p>Tình trạng: <em>Đã Vào Lộ Trình</em></p><p class="two-line">Planning time: <b>26/01/2021 05:00 - 28/01/2021 08:20</b></p>
      </div>
    </main>
  </div>
</section>

<!-- Callouts drawn over both screens -->
<svg class="callouts" viewBox="0 0 1920 1368">
  <g fill="none" stroke="#ff0039" stroke-width="4.200"><rect x="1009.500" y="491.500" width="178" height="62.500" rx="2"/><rect x="992" y="1164" width="285" height="115.500" rx="2"/><path d="M1091 556l66.500 586"/></g>
  <path fill="#ff0039" d="M1158.800 1161l-10-22 8.500 3 7.500-5.500z"/>
  <use href="#hand" x="1157" y="527" width="18" height="21"/>
  <use href="#hand" x="896" y="1309" width="18" height="21"/>
</svg>
</div>
</body>
</html>
```
FILE: styles.css
```css
* { box-sizing: border-box; }
body { margin: 0; font-family: Roboto, "Noto Sans CJK SC", sans-serif; font-size: 16px; color: #333; }
.sprite { position: absolute; width: 0; height: 0; }
.page { position: relative; width: 1920px; height: 1368px; overflow: hidden; background: #fff; }
.screen { position: relative; width: 1920px; display: flex; flex-direction: column; overflow: hidden; }
.screen-plan { height: 902px; background: #949494; --blue: #1f446b; --on: #1d3a5c; --ink: #9b9da0; --arrow: #949494; --link: #234b7d; --line: #35597d; }
.screen-list { height: 466px; background: #fff; --blue: #1b65b0; --on: #185290; --ink: #fff; --arrow: #fff; --link: #1b65b0; --line: #4380bd; }

/* top bar */
.topbar { display: flex; align-items: center; flex: none; height: 57px; padding: 0 35px 0 23px; color: var(--link); z-index: 1; box-shadow: 0 2px 8px rgba(0,0,0,.12); }
.screen-plan .topbar { border-top: 1px solid #2b2b2b; background: #949494; }
.screen-list .topbar { height: 77px; padding-top: 20px; background: #fff; border-top: 1px solid #d5d5dc; }
.logo-mark { width: 30px; height: 33px; fill: none; color: #2a68ae; }
.screen-plan .logo-mark { color: #24508a; }
.logo-name { width: 80px; height: 22px; margin-left: 3px; fill: #2467b2; font: 900 22px Lato, sans-serif; overflow: visible; }
.screen-plan .logo-name { fill: #214b7e; }
.burger { display: flex; flex-direction: column; gap: 6px; margin-left: 27px; padding-top: 3px; }
.burger i { width: 22px; height: 1px; background: var(--link); }
.account { display: flex; align-items: center; margin-left: auto; height: 100%; }
.avatar { width: 45px; height: 40px; border-radius: 50%; background: #0d8abc; color: #fff; font: 500 20px/41px Roboto, sans-serif; text-align: center; margin-top: 8px; }
.screen-plan .avatar { background: #175a78; color: #999; }
.user { font-size: 16px; font-weight: 300; width: 42px; margin-left: 17px; margin-top: 1px; }
.chev { width: 10px; height: 6px; margin-left: 12px; margin-top: 1px; }
.inbox { position: relative; margin-left: 20px; width: 44px; height: 30px; }
.inbox svg { position: absolute; left: 24px; top: 9px; width: 20px; height: 18px; color: var(--link); }
.inbox b { position: absolute; left: 0; top: -2px; width: 34px; height: 21px; border-radius: 11px; background: #d64635; color: #fff; font: 500 12px/20px Roboto, sans-serif; text-align: center; letter-spacing: .3px; box-shadow: 0 1px 3px rgba(0,0,0,.3); }
.screen-plan .inbox b { background: #8f372f; color: #aaa; }

/* sidebar */
.columns { display: flex; flex: 1; min-height: 0; }
.side { position: relative; display: flex; flex-direction: column; flex: none; width: 186px; background: var(--blue); color: var(--ink); }
.screen-plan .side { width: 186px; margin-right: 2px; }
.side a { display: flex; align-items: center; flex: none; height: 45.67px; padding: 1px 0 0 17px; font-weight: 300; letter-spacing: -.08px; }
.side a svg { height: 18px; fill: currentColor; flex: none; }
.side .w21 { width: 22px; margin-right: 10px; }
.side .w20 { width: 19px; margin: 0 11px 0 2px; }
.side .w23 { width: 23px; margin: 0 9px 0 0; }
.side a svg.up { height: 14px; margin-top: -4px; }
.side a svg.road { height: 15px; margin-top: -4px; }
.side a svg.cog { width: 20px; height: 20px; margin-left: 3px; margin-right: 9px; }
.side a.on { position: relative; height: 45px; background: var(--on); padding: 0 0 2px 17px; }
.side a.low { height: 45px; padding-top: 0; }
.side .on::after { content: ""; position: absolute; right: 0; top: 9px; border: 13px solid transparent; border-right-color: var(--arrow); border-left: 0; }
.side a.sep { border-top: 1px solid var(--line); padding-top: 0; }
.chat { position: absolute; left: 34px; top: 716px; width: 67px; height: 67px; border-radius: 50% 8px 50% 50%; background: #fdc414; display: flex; align-items: center; justify-content: center; padding: 1px 0 0 2px; box-shadow: 0 3px 6px rgba(0,0,0,.3); }
.chat svg { width: 27px; height: 21px; }
.lang { position: absolute; left: 34px; bottom: 0; width: 148px; height: 46px; background: #fdc414; color: #000; display: flex; align-items: center; gap: 9px; padding-left: 25px; }
.lang i { width: 18px; height: 18px; border: 3px solid #000; border-radius: 50%; }

/* map */
.work { width: 1730px; display: flex; flex-direction: column; }
.map { position: relative; flex: none; height: 460px; padding-top: 1px; overflow: hidden; border-bottom: 1px solid #938b82; }
.mapart { display: block; width: 1730px; height: 458px; background: #6a8296; }
.land { fill: #8f8e8f; }
.wood { fill: #7a8b79; }
.gap { fill: #8f8e8f; }
.water { fill: #6a8fb0; fill-opacity: .75; }
.roads { fill: none; stroke: #a08650; stroke-width: 1.500; stroke-linejoin: round; }
.roads.thin { stroke: #9a8d70; stroke-width: .8; }
.roads.main { stroke: #9d8e5e; stroke-width: 2.800; }
.border { fill: none; stroke: #555756; stroke-width: 1.200; stroke-linejoin: bevel; }
.grid { stroke: #718899; fill: none; stroke-width: 1; opacity: .4; }
.lbl text { fill: #2d2d2d; stroke: #929292; stroke-width: 2px; paint-order: stroke; stroke-opacity: .7; }
.lbl circle { fill: #8f8e8f; stroke: #2d2d2d; stroke-width: 1.500; }
.lbl .big { font-size: 19px; font-weight: 700; fill: #252525; }
.lbl.soft text { fill: #5c5d5f; font-size: 12px; font-weight: 500; }
.lbl.soft .prov { font-size: 15.500px; font-weight: 700; }
.sea { fill: #3e6088; font-size: 13px; }
.route { fill: none; stroke: #3d4391; stroke-width: 5; stroke-linejoin: round; }
.depart { fill: #8f372f; }
.pin { fill: #3d4391; font-size: 13px; font-weight: 500; }
.google { font: 500 23px Roboto, sans-serif; paint-order: stroke; stroke: #8f979e; stroke-width: 2px; }
.crumbs { position: absolute; left: 6px; top: 13px; display: flex; height: 38px; color: #999fa4; font-size: 14px; font-weight: 700; line-height: 38px; text-align: center; }
.crumbs span { border-radius: 3px; background: #2d6189; box-shadow: 0 2px 4px rgba(0,0,0,.25); white-space: nowrap; }
.crumbs .back { width: 223px; margin-right: 3px; letter-spacing: -.25px; padding-left: 1px; }
.back svg { width: 14px; height: 12px; margin-right: 5px; vertical-align: -1px; }
.crumbs .branch { width: 220px; background: rgba(69,120,160,.78); border-radius: 3px 0 0 3px; letter-spacing: -.3px; }
.crumbs .share { width: 54px; border-radius: 0 3px 3px 0; }
.share svg { width: 15px; height: 13px; vertical-align: -2px; }
.swatch { position: absolute; left: 6px; top: 62px; width: 39px; height: 39px; border: 5px solid #979797; border-radius: 4px; background: #1f446b; box-shadow: 0 2px 5px rgba(0,0,0,.35); }
.types { position: absolute; left: 771px; top: 13px; display: flex; height: 45px; font-size: 18.500px; line-height: 44px; text-align: center; color: #4a4a4a; letter-spacing: .6px; }
.types span { width: 101px; background: #949494; box-shadow: 0 1px 3px rgba(0,0,0,.25); }
.types .cur { width: 102px; color: #000; font-weight: 500; }
.filters { position: absolute; left: 1336px; top: 7px; display: flex; gap: 3px; height: 38px; }
.filters span { display: flex; align-items: center; padding: 0 16px; border: 1px solid #2d6189; border-radius: 2px; background: #949494; color: #2b6596; font-size: 14px; font-weight: 700; white-space: nowrap; box-shadow: 0 1px 3px rgba(0,0,0,.4); letter-spacing: -.3px; }
.filters span:first-child { width: 152px; }
.filters span:last-child { width: 233px; letter-spacing: -.26px; }
.filters svg { width: 14px; height: 14px; margin-left: 7px; flex: none; }
.ctl { position: absolute; left: 1674px; width: 45px; height: 45px; border-radius: 2px; background: #949494; display: flex; align-items: center; justify-content: center; box-shadow: 0 1px 4px rgba(0,0,0,.3); }
.peg { top: 341px; }
.full { top: 408px; }
.peg svg { width: 20px; height: 35px; margin-right: 1px; }
.full svg { width: 20px; height: 20px; margin-right: 1px; }
.credits { position: absolute; left: 1342px; top: 449px; display: flex; gap: 1px; height: 10px; font-size: 13px; line-height: 17px; color: #262626; white-space: nowrap; overflow: hidden; width: 321px; font-weight: 300; }
.credits span { background: rgba(143,147,150,.75); height: 10px; flex: none; }
.credits span:first-child { width: 134px; padding-left: 5px; letter-spacing: -.75px; }
.credits span:nth-child(2) { width: 74px; padding-left: 6px; background: rgba(125,136,146,.75); }
.credits span:last-child { width: 111px; padding-left: 5px; letter-spacing: -.8px; }
.credits i { display: inline-block; width: 2px; height: 8px; background: #222; }

/* plan timeline */
.planbar { display: flex; align-items: center; flex: none; height: 34px; background: #1f446b; color: #999; padding-left: 17px; }
.toggle { width: 32px; height: 17px; border: 1px solid #999; border-radius: 2px; margin-top: -3px; }
.toggle i { display: block; width: 16px; height: 15px; background: #999 linear-gradient(#36577b, #36577b) center / 5px 4px no-repeat; }
.ptitle { margin: -2px auto 0 17px; font-size: 16px; letter-spacing: -.1px; }
.down { width: 14px; height: 15px; margin-right: 8px; margin-top: -3px; }
.all { width: 63px; height: 34px; background: #1c3550; line-height: 34px; text-align: center; font-size: 14.500px; letter-spacing: -.3px; }
.one { width: 26px; height: 7px; background: #999; margin-left: 13px; }
.two { display: flex; flex-direction: column; gap: 3px; width: 24px; margin: 0 31px 0 27px; }
.two i { height: 6px; background: #999; }
.tl-title { flex: none; height: 26px; background: #1e364f; color: #999; }
.tl-title span { display: block; width: 241px; height: 26px; padding-left: 17px; line-height: 27px; font-size: 15.700px; border-right: 1px solid #999; }
.tl-head { display: flex; flex: none; height: 27px; background: #1f446b; color: #999; overflow: hidden; }
.tl-left { display: flex; align-items: center; flex: none; width: 241px; border-right: 1px solid #999; padding-left: 17px; font-size: 15.600px; font-weight: 500; letter-spacing: 0; }
.eye { width: 18px; height: 13px; fill: currentColor; flex: none; }
.tl-left span { margin-left: 57px; width: 85px; white-space: nowrap; }
.flt { width: 18px; height: 12px; margin-left: 0; }
.caret { border: 5px solid transparent; border-top-color: currentColor; border-bottom: 0; }
.flt + .caret { margin-left: 18px; }
.hours { display: flex; margin-left: -23px; overflow: hidden; line-height: 28px; font-size: 15px; font-weight: 500; letter-spacing: -.15px; }
.hours span { flex: none; width: 112.500px; text-align: center; }
.tl-body { display: flex; flex: none; height: 225px; background: #8f8f8f; }
.vehicles { flex: none; width: 241px; border-right: 2px solid #848484; padding-top: 25px; }
.veh { display: flex; align-items: center; height: 61px; padding-left: 17px; color: #252e38; margin-bottom: 52px; }
.veh p { margin: 0 0 0 18px; width: 100px; color: #2f2f2f; font-size: 15.700px; line-height: 20px; font-weight: 300; }
.veh small { font-size: 15px; letter-spacing: -.15px; }
.truck { width: 36px; height: 29px; margin-top: 2px; fill: #2a2e38; }
.veh:last-child .truck { margin-left: -9px; }
.lanes { position: relative; flex: 1; overflow: hidden; background: repeating-linear-gradient(90deg, #888 0 1px, transparent 1px 112.500px) 32.500px 0; }
.dots { position: absolute; left: 1px; right: 0; top: 128px; height: 2px; background: repeating-linear-gradient(90deg, #5c5e86 0 3px, transparent 3px 5px); }
.solid { position: absolute; left: 1px; right: 0; top: 166px; height: 8px; background: #393f80; border: 1px solid #53567f; border-width: 1px 0; }
.person { position: absolute; left: 381px; top: 117px; width: 27px; height: 28px; border-radius: 2px; background: #2e3642; padding: 5px 4px; }
.person svg { width: 19px; height: 18px; display: block; }
.bluey { position: absolute; left: 419px; top: 123px; color: #1f446b; }
.stop { position: absolute; left: 555px; top: 151px; width: 112px; height: 35px; border: 1px solid #252e45; border-radius: 7px; background: #949494; text-align: center; line-height: 34px; color: #30343a; }
.hscroll { position: relative; display: flex; align-items: center; flex: none; height: 27px; background: #8e8e8e; }
.hscroll .l { margin-left: 8px; border: 5px solid transparent; border-right-color: #333; border-left: 0; margin-top: 5px; }
.hscroll .thumb { width: 187px; height: 17px; background: #747474; margin: 5px auto 0 622px; }
.hscroll .r { margin: 5px 8px 0 0; border: 5px solid transparent; border-left-color: #333; border-right: 0; }
.stats { display: flex; flex: none; height: 40px; background: #919191; font-size: 11px; color: #2b2f38; }
.nums { display: grid; grid-template-columns: 63px 96px 68px 84px 74px 164px 130px 128px 132px 108px; padding: 8px 0 0 9px; line-height: 13px; text-align: center; letter-spacing: .2px; white-space: nowrap; }
.acts { display: flex; gap: 2.300px; margin: 2px 0 0 auto; height: 36px; }
.act { display: flex; align-items: center; justify-content: center; height: 35px; border-radius: 18px; border: 1px solid #555b60; font-size: 16px; color: #a5a5a5; letter-spacing: -.15px; }
.blue { width: 130px; background: #1f446b; }
.orange { width: 114px; background: #91400f; }
.green { width: 145px; background: #2b5f2d; }
.amber { width: 116px; background: #95703a; border-color: #95703a; }
.act > svg { width: 12px; height: 8px; margin-left: 6px; }
.act .lock { height: 19px; margin: 1px 12px 0 0; fill: currentColor; }

/* confirm dialog */
.modal { position: absolute; left: 623px; top: 353px; width: 675px; height: 198px; border-radius: 4px; background: #fff; overflow: visible; box-shadow: 0 8px 28px rgba(0,0,0,.5); }
.mhead { display: flex; align-items: center; justify-content: space-between; height: 72px; padding: 0 24px 0 17px; background: #1b65b0; border-radius: 4px 4px 0 0; }
.mhead h2 { margin: -2px 0 0; font-weight: 400; font-size: 22.800px; color: #e6edf6; }
.mhead svg { width: 16px; height: 16px; margin-top: 1px; }
.modal p { margin: 22px 0 0 22px; font-size: 16px; line-height: 24px; font-weight: 300; color: #222; white-space: nowrap; }
.mbtns { display: flex; padding: 32px 0 0 135px; gap: 108px; font-size: 14px; font-weight: 700; line-height: 38px; text-align: center; }
.cancel { width: 157px; height: 38px; color: #1b65b0; border-radius: 2px; box-shadow: 0 1px 4px rgba(0,0,0,.3); letter-spacing: -.3px; }
.ok { width: 148px; height: 38px; color: #fff; background: #1b65b0; border-radius: 3px; box-shadow: 0 3px 6px rgba(0,0,0,.5); letter-spacing: -.3px; }

/* vehicle list */
.content { position: relative; flex: 1; padding: 18px 22px 0 22px; display: flex; flex-direction: column; }
.tabs { position: relative; display: flex; flex: none; height: 47px; border-bottom: 1px solid #ddd; line-height: 48px; font-size: 16px; font-weight: 400; color: #3a7cbf; gap: 38px; letter-spacing: -.08px; }
.tab { width: 121px; height: 47px; border: 1px solid #ddd; border-bottom-color: #fff; border-radius: 3px 3px 0 0; background: #fff; color: #555; text-align: center; margin-right: -18px; line-height: 46px; }
.fab { position: absolute; left: 1321px; top: 18px; width: 54px; height: 54px; border-radius: 50%; background: #fec044; display: flex; align-items: center; justify-content: center; box-shadow: 0 4px 9px rgba(0,0,0,.28); }
.fab svg { width: 16px; height: 16px; }
.tools { display: flex; flex: none; margin: 34px 0 0 17px; height: 39px; }
.tools > div { display: flex; align-items: center; height: 38px; border: 1px solid #c9c9c9; border-radius: 2px; white-space: nowrap; }
.tools .sel { width: 102px; padding: 0 7px 1px 9px; justify-content: space-between; color: #000; font-weight: 500; border-radius: 2px 0 0 2px; border-right: 0; }
.sel .caret { color: #777; }
.tools .search { width: 359px; border-left-color: #bbb; padding: 0 26px 1px 9px; justify-content: space-between; color: #aaa; letter-spacing: .42px; border-radius: 0 2px 2px 0; }
.search svg { width: 18px; height: 18px; }
.tools .bsel { width: 244px; height: 39px; margin-left: 6px; padding: 0 15px 0 16px; justify-content: space-between; font-size: 14px; font-weight: 700; color: #333; border-color: #bbb; box-shadow: 0 0 7px rgba(90,170,235,.55); letter-spacing: -.28px; }
.tools .tbtn { justify-content: center; margin-left: 6px; }
.tools .list { width: 54px; }
.tools .mapb { width: 49px; margin-left: 5px; }
.list svg { width: 14px; height: 12px; }
.mapb svg { width: 17px; height: 13px; margin-top: -2px; }
.tools .refresh { width: 114px; justify-content: flex-start; padding-left: 19px; font-size: 14px; font-weight: 700; color: #222; letter-spacing: -.1px; }
.refresh svg { width: 14px; height: 14px; margin-right: 7px; }
.tools .date { width: 211px; margin-left: 6px; padding: 0 0 2px 14px; font-weight: 300; color: #444; letter-spacing: -.1px; }
h3 { flex: none; margin: 43px 0 0 23px; height: 24px; line-height: 24px; font-size: 16px; font-weight: 500; letter-spacing: -.15px; }
.board { display: flex; flex: none; margin: 5px 0 0 17px; height: 200px; }
.tbl { width: 404px; }
.row { display: grid; grid-template-columns: 135px 135px 1fr; height: 54px; padding-left: 9px; line-height: 36px; font-weight: 400; }
.row span { white-space: nowrap; }
.row span:last-child { border-bottom: 1px solid #f4f4f4; margin-top: -10px; padding-top: 10px; height: 54px; }
.row.hd { background: #f7f9fc; line-height: 53px; font-weight: 500; letter-spacing: -.08px; font-size: 16px; }
.row.hd span:last-child { border: 0; margin: 0; padding: 0; }
.gantt { width: 1231px; border-left: 2px solid #eee; border-right: 1px solid #ddd; }
.g1 { height: 27px; background: #f1f3f5; border-bottom: 1px solid #ddd; }
.g2 { height: 28px; border-bottom: 1px solid #eee; }
.g3 { display: flex; height: 54px; border-bottom: 1px solid #ddd; }
.g2 + .g3 { height: 44px; }
.bar { width: 527px; height: 23px; margin: 15px 0 0 256px; border-radius: 3px; background: #fac644; }
.vscroll { width: 21px; background: #f1f1f1; display: flex; flex-direction: column; align-items: center; }
.u { margin-top: 9px; border: 5px solid transparent; border-bottom-color: #444; border-top: 0; }
.vt { width: 17px; flex: 1; margin-top: 60px; background: #c1c1c1; }
.tip { position: absolute; left: 795px; top: 183px; width: 338px; height: 126px; padding: 10px 30px 0 14px; background: #fff; border-radius: 4px; box-shadow: 0 1px 4px rgba(0,0,0,.4); font-weight: 300; color: #222; }
.tip p { margin: 0; line-height: 28px; white-space: nowrap; letter-spacing: -.02px; }
.tip b { font-weight: 500; }
.tip .two-line { line-height: 22px; white-space: normal; padding-top: 3px; width: 260px; }
.tip em { display: inline-block; height: 24px; line-height: 22px; padding: 0 9px; border: 1px solid #fac644; border-radius: 12px; background: #fef1d3; color: #fac644; font-style: normal; font-weight: 400; letter-spacing: -.1px; }
.callouts { position: absolute; left: 0; top: 0; z-index: 5; width: 1920px; height: 1368px; pointer-events: none; }
```
